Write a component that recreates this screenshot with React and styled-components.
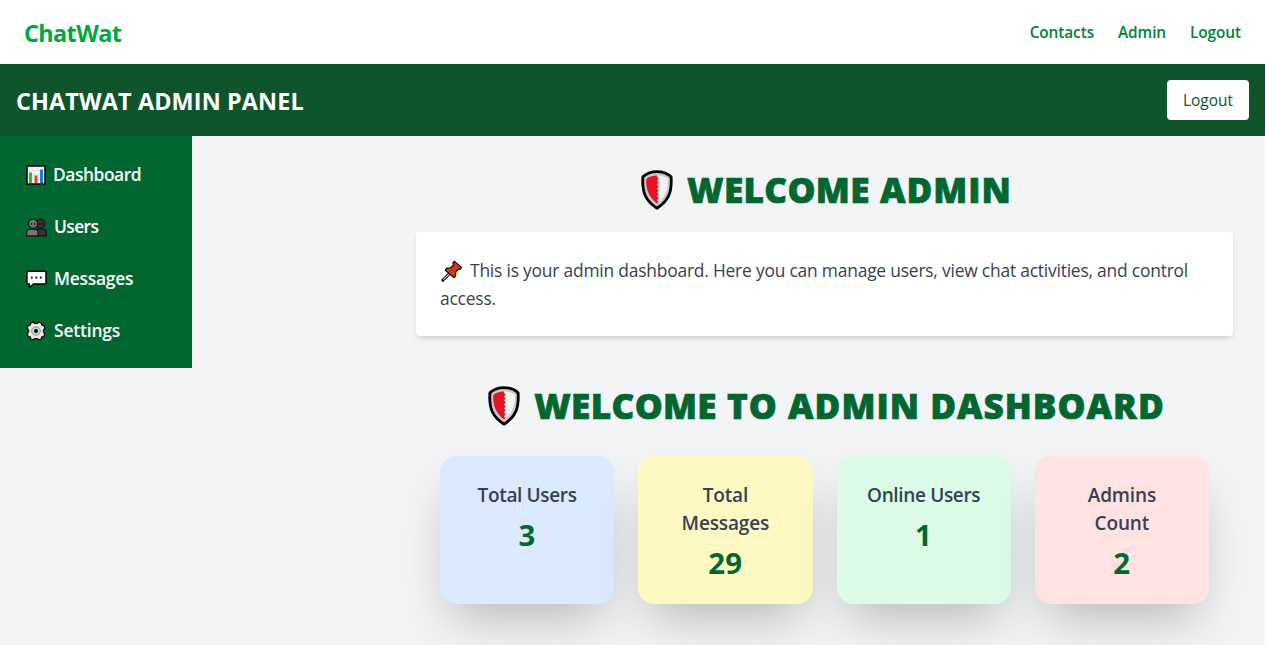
import React from "react";
import styled, { createGlobalStyle } from "styled-components";

const GlobalStyle = createGlobalStyle`
  *, *::before, *::after { box-sizing: border-box; }
  html, body { margin: 0; padding: 0; background: #fff; }
  body { overflow: hidden; font-family: "Segoe UI", "Open Sans", "Noto Sans", sans-serif; }
  h1, h2, p, ul { margin: 0; padding: 0; }
  a { color: inherit; text-decoration: none; }
`;

const Page = styled.div`
  width: 1265px;
  height: 645px;
  background: #f3f4f6;
  overflow: hidden;
`;

const Navbar = styled.nav`
  height: 64px;
  padding: 0 24px;
  display: flex;
  align-items: center;
  justify-content: space-between;
  background: #fff;
`;

const Brand = styled.a`
  color: #00a63e;
  font-size: 23.4px;
  line-height: 32px;
  font-weight: 700;
  letter-spacing: -0.6px;
  padding-top: 2px;
`;

const NavLinks = styled.div`
  display: flex;
  gap: 24px;
  padding-top: 2px;
  color: #008236;
  font-size: 15.4px;
  line-height: 24px;
  font-weight: 600;
  letter-spacing: -0.1px;
`;

const Header = styled.header`
  height: 72px;
  padding: 16px;
  display: flex;
  align-items: center;
  justify-content: space-between;
  background: #0f542b;
  color: #fff;
`;

const HeaderTitle = styled.h1`
  font-size: 23.4px;
  line-height: 32px;
  font-weight: 700;
  letter-spacing: 0.13px;
  text-transform: uppercase;
  padding-top: 2px;
`;

const LogoutButton = styled.button`
  width: 82px;
  height: 40px;
  padding: 2px 0 0;
  border: 0;
  border-radius: 4px;
  background: #fff;
  color: #0d542b;
  font: 400 15.4px/24px "Segoe UI", "Open Sans", "Noto Sans", sans-serif;
`;

const Body = styled.div`
  display: flex;
  align-items: flex-start;
`;

const Sidebar = styled.ul`
  width: 192px;
  flex: none;
  padding: 16px;
  display: flex;
  flex-direction: column;
  gap: 8px;
  list-style: none;
  background: #016630;
  color: #fff;
`;

const SidebarItem = styled.li`
  height: 44px;
  padding: 10px 8px 8px 10px;
  display: flex;
  align-items: center;
  gap: ${(p) => p.$gap}px;
  font-size: 17.4px;
  line-height: 26px;
  font-weight: 600;
  letter-spacing: ${(p) => p.$tracking}px;
  svg { flex: none; }
  span { padding-bottom: 2px; }
`;

const Main = styled.main`
  flex: 1;
  min-width: 0;
  padding: 32px 32px 32px 224px;
`;

const Heading = styled.h1`
  height: 40px;
  display: flex;
  align-items: center;
  justify-content: center;
  gap: 14px;
  padding-left: 4px;
  color: #016630;
  font-size: 35.2px;
  line-height: 40px;
  font-weight: 800;
  -webkit-text-stroke: 0.7px #016630;
  text-transform: uppercase;
  white-space: nowrap;
  svg { flex: none; margin-top: 4px; }
`;

const HeadingText = styled.span`
  padding-top: 2px;
  letter-spacing: 1px;
`;

const TightWord = styled.span`
  letter-spacing: 0.3px;
`;

const Notice = styled.section`
  margin-top: 24px;
  height: 104px;
  padding: 24px;
  border-radius: 4px;
  background: #fff;
  box-shadow: 0 4px 6px -1px rgba(0, 0, 0, 0.1), 0 2px 4px -2px rgba(0, 0, 0, 0.1);
  color: #364153;
  font-size: 17.4px;
  line-height: 28px;
  letter-spacing: -0.2px;
  svg { vertical-align: -5px; margin: 0 7px 0 1px; }
`;

const Stats = styled.section`
  margin-top: 24px;
  padding: 24px;
`;

const StatGrid = styled.div`
  margin-top: 32px;
  display: grid;
  grid-template-columns: repeat(4, 1fr);
  gap: 24px;
`;

const StatCard = styled.div`
  height: 148px;
  padding: 25px 24px 23px;
  border-radius: 16px;
  background: ${(p) => p.$color};
  box-shadow: 0 25px 50px -12px rgba(0, 0, 0, 0.25);
  text-align: center;
`;

const StatLabel = styled.h2`
  margin: 0 -6px;
  padding: 0 ${(p) => (p.$wrap ? 20 : 0)}px;
  color: #364153;
  font-size: 19px;
  line-height: 28px;
  font-weight: 600;
  letter-spacing: ${(p) => (p.$wrap ? -0.15 : -0.35)}px;
`;

const StatValue = styled.p`
  margin-top: 8px;
  color: #016630;
  font-size: 29.4px;
  line-height: 36px;
  font-weight: 700;
  letter-spacing: 0.4px;
`;

const ShieldIcon = () => (
  <svg width="32" height="40" viewBox="0 0 32 40">
    <path d="M16 1.600C11.500 1.600 6 2.800 1.900 6.800C1.500 13 1.700 19.500 4 25C6.300 30.500 11 35 16 38.200C21 35 25.700 30.500 28 25C30.300 19.500 30.500 13 30.100 6.800C26 2.800 20.500 1.600 16 1.600Z" fill="#c9c9c9" stroke="#000" strokeWidth="2.800" strokeLinejoin="round" />
    <path d="M16 5.500C20.500 5.500 24.500 6.800 27 9.200C27.200 18 25.500 26.500 16 33.500Z" fill="#f2f2f2" />
    <path d="M16 5.500C11.500 5.500 7.500 6.800 5.200 9.200C5 18 6.800 26.500 16 33.500L17.500 32L16 30.200L17.800 28.200L16 26.300L17.800 24.300L16 22.400L17.800 20.400L16 18.500L17.800 16.500L16 14.600L17.800 12.600L16 10.700L17.800 8.700L16 7Z" fill="#e81224" />
  </svg>
);

const ChartIcon = () => (
  <svg width="20" height="20" viewBox="0 0 20 20">
    <rect x="1" y="1" width="18" height="18" fill="#f2f2f2" stroke="#000" strokeWidth="1.500" />
    <path d="M2 5.500H18M2 10H18M2 14.500H18" stroke="#ddd" strokeWidth="0.700" />
    <path d="M4.500 7.500V18" stroke="#16c60c" strokeWidth="2.800" />
    <path d="M10 10.500V18" stroke="#f03a17" strokeWidth="2.800" />
    <path d="M15.500 4.500V18" stroke="#0078d7" strokeWidth="2.800" />
  </svg>
);

const UsersIcon = () => (
  <svg width="21" height="20" viewBox="0 0 21 20">
    <g stroke="#111" strokeWidth="1.100">
      <circle cx="14.300" cy="6.700" r="4.600" fill="#333" />
      <path d="M9 18.900V15.500C9 13 11 12 13 12H16.500C18.700 12 20.300 13.500 20.300 15.500V18.900Z" fill="#333" />
      <circle cx="7" cy="6.700" r="4.600" fill="#707070" />
      <path d="M0.700 18.900V15.500C0.700 13.500 2 12.300 4 12.300H8.500C10.500 12.300 12 13.500 12 15.500V18.900Z" fill="#767676" />
    </g>
    <path d="M5.600 6.200V7.700M8.600 6.200V7.700M14 6.200V7.700M16.600 6.200V7.700" stroke="#000" strokeWidth="1" />
  </svg>
);

const MessageIcon = () => (
  <svg width="21" height="20" viewBox="0 0 21 20">
    <path d="M2 2.200H19L20 3.200V14L19 15H7.500L3.500 18.500V15H2L1 14V3.200Z" fill="#fff" stroke="#000" strokeWidth="1.400" strokeLinejoin="round" />
    <g fill="#222">
      <circle cx="5.800" cy="8.700" r="1.100" />
      <circle cx="10.300" cy="8.700" r="1.100" />
      <circle cx="14.800" cy="8.700" r="1.100" />
    </g>
  </svg>
);

const GearIcon = () => (
  <svg width="20" height="20" viewBox="0 0 20 20">
    <path d="M7.100 1.200L9 2.500H11L12.900 1.200L15.500 2.300L15.800 4.200L17.700 4.500L18.800 7.100L17.500 9V11L18.800 12.900L17.700 15.500L15.800 15.800L15.500 17.700L12.900 18.800L11 17.500H9L7.100 18.800L4.500 17.700L4.200 15.800L2.300 15.500L1.200 12.900L2.500 11V9L1.200 7.100L2.300 4.500L4.200 4.200L4.500 2.300Z" stroke="#000" strokeWidth="1.200" fill="#e6e6e6" strokeLinejoin="round" />
    <circle cx="10" cy="10" r="4.400" fill="#ccc" stroke="#999" strokeWidth="0.900" />
    <circle cx="10" cy="10" r="1.900" fill="#000" />
  </svg>
);

const PinIcon = () => (
  <svg width="22" height="22" viewBox="0 0 22 22">
    <path d="M8.500 13.500L2 20" stroke="#000" strokeWidth="3" strokeLinecap="square" />
    <path d="M8.500 13.500L2.200 19.800" stroke="#ccc" strokeWidth="1.100" />
    <path d="M13.300 1.300L20.500 7.500L19.300 9.200L17.300 9L14.700 12.300L14.500 16L12.800 17.600L4.300 10.300L5.600 8.200L9.600 8L12.500 5L12 3Z" fill="#e8380d" stroke="#111" strokeWidth="1.300" strokeLinejoin="round" />
    <path d="M9.600 8L14.700 12.300" stroke="#c42b08" strokeWidth="1" />
  </svg>
);

const menu = [
  { label: "Dashboard", Icon: ChartIcon, gap: 7, tracking: -0.45 },
  { label: "Users", Icon: UsersIcon, gap: 7, tracking: -0.6 },
  { label: "Messages", Icon: MessageIcon, gap: 7, tracking: -0.25 },
  { label: "Settings", Icon: GearIcon, gap: 8, tracking: -0.15 },
];

const stats = [
  { label: "Total Users", value: 3, color: "#dbeafe" },
  { label: "Total Messages", value: 29, color: "#fef9c2", wrap: true },
  { label: "Online Users", value: 1, color: "#dcfce7" },
  { label: "Admins Count", value: 2, color: "#ffe2e2", wrap: true },
];

export default function App() {
  return (
    <Page>
      <GlobalStyle />
      <Navbar>
        <Brand href="#">ChatWat</Brand>
        <NavLinks>
          <a href="#">Contacts</a>
          <a href="#">Admin</a>
          <a href="#">Logout</a>
        </NavLinks>
      </Navbar>
      <Header>
        <HeaderTitle>ChatWat Admin Panel</HeaderTitle>
        <LogoutButton>Logout</LogoutButton>
      </Header>
      <Body>
        <Sidebar>
          {menu.map(({ label, Icon, gap, tracking }) => (
            <SidebarItem key={label} $gap={gap} $tracking={tracking}>
              <Icon />
              <span>{label}</span>
            </SidebarItem>
          ))}
        </Sidebar>
        <Main>
          <Heading>
            <ShieldIcon />
            <HeadingText>
              <TightWord>Welcome</TightWord> Admin
            </HeadingText>
          </Heading>
          <Notice>
            <p>
              <PinIcon />
              This is your admin dashboard. Here you can manage users, view chat activities, and control access.
            </p>
          </Notice>
          <Stats>
            <Heading>
              <ShieldIcon />
              <HeadingText>
                <TightWord>Welcome</TightWord> to Admin Dashboard
              </HeadingText>
            </Heading>
            <StatGrid>
              {stats.map((s) => (
                <StatCard key={s.label} $color={s.color}>
                  <StatLabel $wrap={s.wrap}>{s.label}</StatLabel>
                  <StatValue>{s.value}</StatValue>
                </StatCard>
              ))}
            </StatGrid>
          </Stats>
        </Main>
      </Body>
    </Page>
  );
}
